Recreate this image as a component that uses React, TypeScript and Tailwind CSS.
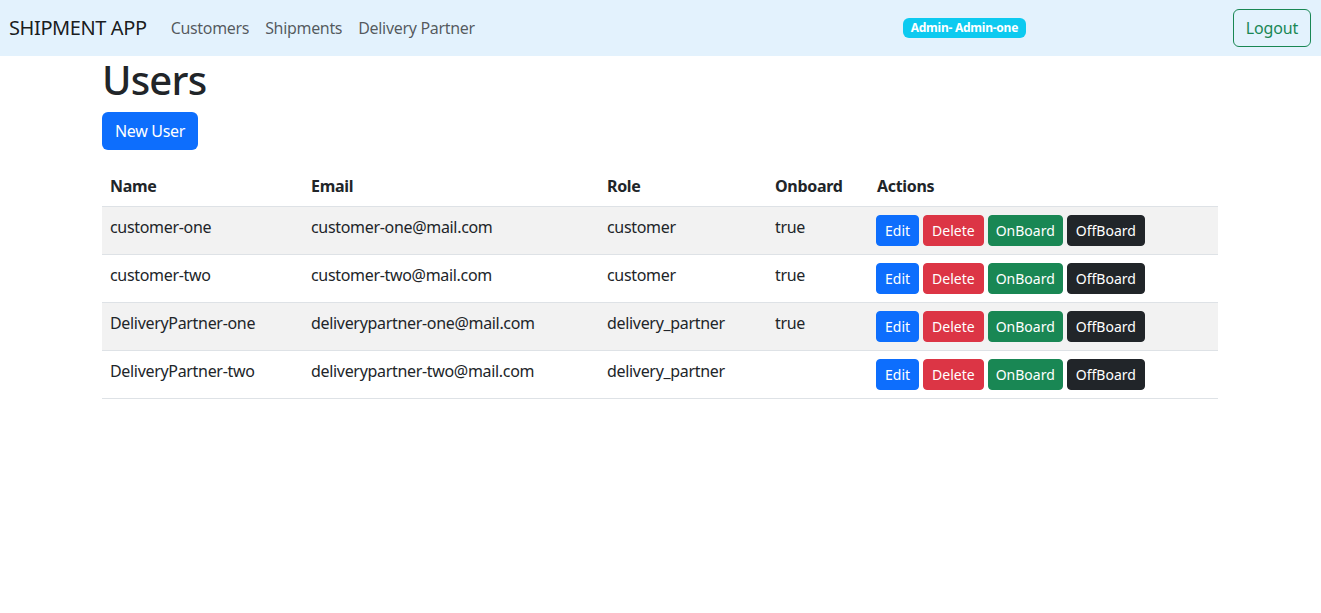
import React from "react";

const rows = [
  { name: "customer-one", email: "customer-one@mail.com", role: "customer", onboard: "true" },
  { name: "customer-two", email: "customer-two@mail.com", role: "customer", onboard: "true" },
  { name: "DeliveryPartner-one", email: "deliverypartner-one@mail.com", role: "delivery_partner", onboard: "true" },
  { name: "DeliveryPartner-two", email: "deliverypartner-two@mail.com", role: "delivery_partner", onboard: "" },
];

export default function App() {
  return (
    <div className="min-h-[613px] bg-white text-[#212529]" style={{ fontFamily: '"Noto Sans", sans-serif' }}>
      <nav className="h-[56px] bg-[#e3f2fd] flex items-center pl-[9px] pr-[10px]">
        <span className="text-[20px] text-black/90 mr-[16px] leading-[30px] tracking-[-0.02em]">SHIPMENT APP</span>
        <a className="text-[16px] text-black/65 px-[8px] leading-[24px] tracking-[-0.02em]">Customers</a>
        <a className="text-[16px] text-black/65 px-[8px] leading-[24px] tracking-[-0.02em]">Shipments</a>
        <a className="text-[16px] text-black/65 px-[8px] leading-[24px] tracking-[-0.02em]">Delivery Partner</a>
        <span className="ml-[420px] bg-[#0dcaf0] text-white font-bold text-[12px] leading-[12px] px-[8px] py-[4px] rounded-[6px] tracking-[-0.02em]">Admin- Admin-one</span>
        <div className="flex-1" />
        <button className="h-[38px] px-[12px] border border-[#198754] text-[#198754] rounded-[6px] text-[16px] tracking-[-0.01em]">Logout</button>
      </nav>
      <div className="w-[1116px] ml-[102px]">
        <h1 className="text-[40px] font-medium leading-[48px] mb-[8px] tracking-[-0.02em]">Users</h1>
        <button className="h-[38px] px-[13px] bg-[#0d6efd] text-white rounded-[6px] text-[16px] tracking-[-0.02em]">New User</button>
        <table className="w-full mt-[16px] border-collapse text-[16px] leading-[24px] tracking-[-0.02em]">
          <thead>
            <tr className="border-b border-[#dee2e6] font-bold text-left">
              <th className="w-[201px] p-[8px]">Name</th>
              <th className="w-[296px] p-[8px]">Email</th>
              <th className="w-[168px] p-[8px]">Role</th>
              <th className="w-[102px] p-[8px]">Onboard</th>
              <th className="p-[8px]">Actions</th>
            </tr>
          </thead>
          <tbody>
            {rows.map((r, i) => (
              <tr key={i} className={"border-b border-[#dee2e6] " + (i % 2 === 0 ? "bg-[#f2f2f2]" : "")}>
                <td className="p-[8px] align-top">{r.name}</td>
                <td className="p-[8px] align-top">{r.email}</td>
                <td className="p-[8px] align-top">{r.role}</td>
                <td className="p-[8px] align-top">{r.onboard}</td>
                <td className="pl-[7px] pr-[8px] py-[8px] align-top">
                  <div className="flex gap-[4px] text-[14px] text-white leading-[21px] tracking-normal">
                    <button className="h-[31px] px-[8px] pb-[1px] border border-[#0d6efd] rounded-[4px] bg-[#0d6efd]">Edit</button>
                    <button className="h-[31px] px-[8px] pb-[1px] border border-[#dc3545] rounded-[4px] bg-[#dc3545]">Delete</button>
                    <button className="h-[31px] px-[7px] pb-[1px] border border-[#198754] rounded-[4px] bg-[#198754]">OnBoard</button>
                    <button className="h-[31px] px-[8px] pb-[1px] border border-[#212529] rounded-[4px] bg-[#212529]">OffBoard</button>
                  </div>
                </td>
              </tr>
            ))}
          </tbody>
        </table>
      </div>
    </div>
  );
}
